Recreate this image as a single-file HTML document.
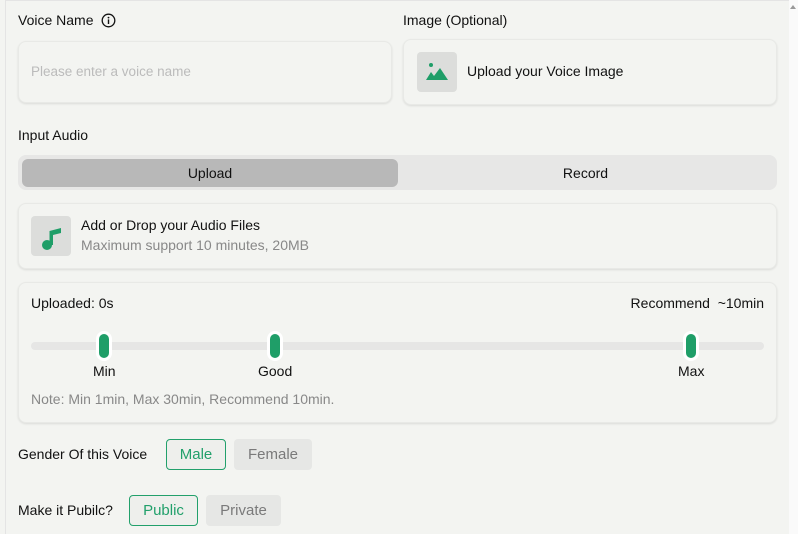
<!DOCTYPE html>
<html><head><style>
*{box-sizing:border-box;margin:0;padding:0}
body{width:798px;height:534px;overflow:hidden;background:#f3f4f1;font-family:"Liberation Sans",sans-serif;color:#111;position:relative;font-size:14px}
.a{position:absolute}
.card{position:absolute;background:#f3f4f1;border-radius:8px;box-shadow:0 1px 2px rgba(0,0,0,.1);border:1px solid #e8e9e6}
.ib{position:absolute;width:40px;height:40px;background:#dcdddb;border-radius:4px}
.h{position:absolute;width:10px;height:24px;border-radius:5px;background:#1f9e68;box-shadow:0 0 0 3px #fff}
.btn{position:absolute;height:31px;border-radius:4px;font-size:15px;text-align:center;line-height:29px}
.on{border:1px solid #22a06b;color:#22a06b;background:#eeefec}
.off{background:#e6e7e5;color:#7a7a7a;line-height:31px}
</style></head><body>
<div class="a" style="left:5px;top:0;width:785px;height:1px;background:#e4e4e4"></div>
<div class="a" style="left:5px;top:0;width:1px;height:534px;background:#e4e4e4"></div>
<div class="a" style="left:789px;top:0;width:9px;height:534px;background:#fafafa"></div>
<div class="a" style="left:790px;top:5px;width:0;height:0;border-left:3px solid transparent;border-right:3px solid transparent;border-bottom:4px solid #999"></div>

<div class="a" style="left:18px;top:12px">Voice Name</div>
<svg class="a" style="left:101px;top:13px" width="15" height="15" viewBox="0 0 15 15"><circle cx="7.5" cy="7.5" r="6.3" fill="none" stroke="#111" stroke-width="1.3"/><circle cx="7.5" cy="4.6" r="0.9" fill="#111"/><rect x="6.8" y="6.4" width="1.4" height="4.6" fill="#111"/></svg>
<div class="card" style="left:18px;top:41px;width:374px;height:62px"></div>
<div class="a" style="left:31px;top:64px;color:#bbb;font-size:13.5px">Please enter a voice name</div>

<div class="a" style="left:403px;top:12px">Image (Optional)</div>
<div class="card" style="left:403px;top:39px;width:374px;height:66px"></div>
<div class="ib" style="left:417px;top:52px"></div>
<svg class="a" style="left:417px;top:52px" width="40" height="40"><circle cx="14" cy="13" r="2" fill="#1f9e68"/><path d="M9 28 L14 20 L17 24 L23 16 L31 28 Z" fill="#1f9e68"/></svg>
<div class="a" style="left:467px;top:63px">Upload your Voice Image</div>

<div class="a" style="left:18px;top:127px">Input Audio</div>
<div class="a" style="left:18px;top:155px;width:759px;height:35px;background:#e7e7e6;border-radius:8px"></div>
<div class="a" style="left:22px;top:159px;width:376px;height:28px;background:#b8b8b8;border-radius:6px;text-align:center;line-height:28px">Upload</div>
<div class="a" style="left:398px;top:159px;width:375px;height:28px;text-align:center;line-height:28px">Record</div>

<div class="card" style="left:18px;top:203px;width:759px;height:66px"></div>
<div class="ib" style="left:31px;top:216px"></div>
<svg class="a" style="left:31px;top:216px" width="40" height="40"><circle cx="16" cy="29" r="5" fill="#1f9e68"/><path d="M18.5 29 V15 L30 12 V17 L22 19 V29 Z" fill="#1f9e68"/></svg>
<div class="a" style="left:81px;top:217px">Add or Drop your Audio Files</div>
<div class="a" style="left:81px;top:237px;color:#888">Maximum support 10 minutes, 20MB</div>

<div class="card" style="left:18px;top:282px;width:759px;height:141px"></div>
<div class="a" style="left:31px;top:295px">Uploaded: 0s</div>
<div class="a" style="right:34px;top:295px;white-space:nowrap">Recommend &nbsp;~10min</div>
<div class="a" style="left:31px;top:342px;width:733px;height:8px;background:#e6e6e5;border-radius:4px"></div>
<div class="h" style="left:99px;top:334px"></div>
<div class="h" style="left:270px;top:334px"></div>
<div class="h" style="left:686px;top:334px"></div>
<div class="a" style="left:93px;top:363px">Min</div>
<div class="a" style="left:258px;top:363px">Good</div>
<div class="a" style="left:678px;top:363px">Max</div>
<div class="a" style="left:31px;top:391px;color:#888">Note: Min 1min, Max 30min, Recommend 10min.</div>

<div class="a" style="left:18px;top:446px">Gender Of this Voice</div>
<div class="btn on" style="left:166px;top:439px;width:60px">Male</div>
<div class="btn off" style="left:234px;top:439px;width:78px">Female</div>
<div class="a" style="left:18px;top:502px">Make it Pubilc?</div>
<div class="btn on" style="left:129px;top:495px;width:69px">Public</div>
<div class="btn off" style="left:206px;top:495px;width:75px">Private</div>
</body></html>
